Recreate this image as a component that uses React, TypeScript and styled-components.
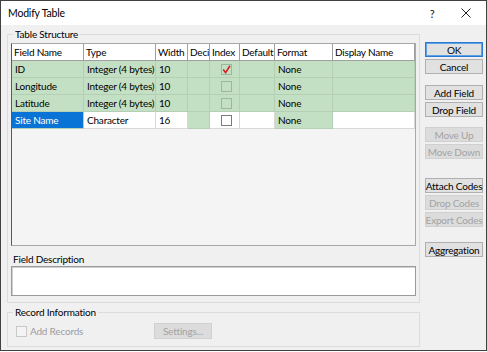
import React from "react";
import styled, { createGlobalStyle, css } from "styled-components";

const GlobalStyle = createGlobalStyle`
  html, body { margin: 0; padding: 0; background: #ffffff; }
  body { font-family: Lato, "Noto Sans", "Liberation Sans", sans-serif; font-size: 10px; letter-spacing: -0.2px; color: #000; }
  * { box-sizing: border-box; }
`;

const Dialog = styled.div`
  width: 487px;
  height: 351px;
  border: 1px solid #404040;
  background: #f0f0f0;
  display: flex;
  flex-direction: column;
  overflow: hidden;
`;

const TitleBar = styled.div`
  height: 24px;
  flex: none;
  background: #ffffff;
  display: flex;
  align-items: center;
  padding: 0 0 0 7px;
`;

const Title = styled.div`
  flex: 1;
  font-size: 10.5px;
`;

const TitleControl = styled.div<{ $w: number }>`
  width: ${(p) => p.$w}px;
  height: 24px;
  display: flex;
  align-items: center;
  justify-content: center;
  font-size: 11px;
  color: #111;
`;

const Body = styled.div`
  flex: 1;
  display: flex;
  padding: 3px 3px 3px 6px;
  gap: 5px;
`;

const LeftCol = styled.div`
  width: 413px;
  display: flex;
  flex-direction: column;
`;

const Group = styled.fieldset<{ $grow?: boolean }>`
  margin: 0;
  border: 1px solid #dcdcdc;
  padding: 0 3px 4px 3px;
  ${(p) => p.$grow && css`flex: 1;`}
  display: flex;
  flex-direction: column;
  min-width: 0;
`;

const Legend = styled.legend`
  padding: 0 2px;
  margin-left: 2px;
  font-size: 10px;
  color: #000;
`;

const Grid = styled.div`
  height: 203px;
  margin-top: 3px;
  border: 1px solid #a8a8a8;
  border-left-color: #5a5a5a;
  background: #f4f4f4;
  display: flex;
  flex-direction: column;
`;

const GridRow = styled.div`
  display: grid;
  grid-template-columns: 72px 72px 32px 22px 30px 35px 58px 82px;
  height: 17px;
`;

const Cell = styled.div<{ $bg: string; $header?: boolean; $center?: boolean; $sel?: boolean }>`
  background: ${(p) => p.$bg};
  color: ${(p) => (p.$sel ? "#ffffff" : "#000000")};
  border-right: 1px solid ${(p) => (p.$header ? "#a0a0a0" : p.$bg === "#ffffff" ? "#d8d8d8" : "#b4cfb4")};
  border-bottom: 1px solid ${(p) => (p.$header ? "#a0a0a0" : p.$bg === "#ffffff" ? "#d8d8d8" : "#b4cfb4")};
  padding: 0 0 0 ${(p) => (p.$header ? 2 : 3)}px;
  display: flex;
  align-items: center;
  justify-content: ${(p) => (p.$center ? "center" : "flex-start")};
  white-space: nowrap;
  overflow: hidden;
  font-size: 10px;
`;

const Check = styled.div<{ $white?: boolean }>`
  width: 11px;
  height: 11px;
  border: 1px solid ${(p) => (p.$white ? "#7a7a7a" : "#9fb59f")};
  background: ${(p) => (p.$white ? "#ffffff" : "transparent")};
  display: flex;
  align-items: center;
  justify-content: center;
`;

const Label = styled.div`
  margin-top: 7px;
  padding-left: 2px;
  font-size: 10px;
  height: 13px;
  line-height: 13px;
`;

const Description = styled.div`
  height: 30px;
  margin-top: 0;
  background: #fff;
  border: 1px solid #9a9a9a;
  box-shadow: inset 1px 1px 0 #d0d0d0;
`;

const RecordRow = styled.div`
  display: flex;
  align-items: center;
  height: 24px;
  padding-left: 5px;
  padding-top: 2px;
`;

const DisabledCheck = styled.div`
  width: 11px;
  height: 11px;
  border: 1px solid #c8c8c8;
  background: #f4f4f4;
  margin-right: 3px;
`;

const DisabledText = styled.div`
  color: #9d9d9d;
  font-size: 10px;
  width: 124px;
`;

const RightCol = styled.div`
  width: 58px;
  display: flex;
  flex-direction: column;
  padding-top: 14px;
`;

const Button = styled.div<{ $disabled?: boolean; $default?: boolean; $gap?: number }>`
  height: 15px;
  margin-top: ${(p) => p.$gap ?? 2}px;
  display: flex;
  align-items: center;
  justify-content: center;
  background: ${(p) => (p.$disabled ? "#dcdcdc" : "#e1e1e1")};
  border: 1px solid ${(p) => (p.$default ? "#2a7bd0" : p.$disabled ? "#d0d0d0" : "#b0b0b0")};
  color: ${(p) => (p.$disabled ? "#a3a3a3" : "#000")};
  font-size: 10px;
  white-space: nowrap;
  ${(p) => p.$default && css`box-shadow: inset 0 0 0 1px #5fa1e6;`}
`;

const SettingsButton = styled(Button)`
  width: 58px;
  height: 16px;
  margin-top: 0;
`;

const GREEN = "#c4e0c4";
const WHITE = "#ffffff";

type CellDef = { text?: string; bg: string; check?: "on" | "off" | "white"; sel?: boolean };

const CheckMark = () => (
  <svg width="9" height="9" viewBox="0 0 9 9">
    <path d="M1.2 4.6 L3.6 7.6 L8 0.8" stroke="#d42020" strokeWidth="1.6" fill="none" />
  </svg>
);

const CloseIcon = () => (
  <svg width="10" height="10" viewBox="0 0 10 10">
    <path d="M0.5 0.5 L9.5 9.5 M9.5 0.5 L0.5 9.5" stroke="#222" strokeWidth="1" fill="none" />
  </svg>
);

const headers = ["Field Name", "Type", "Width", "Deci", "Index", "Default", "Format", "Display Name"];

const greenRow = (name: string, check: "on" | "off"): CellDef[] => [
  { text: name, bg: GREEN },
  { text: "Integer (4 bytes)", bg: GREEN },
  { text: "10", bg: GREEN },
  { bg: GREEN },
  { bg: GREEN, check },
  { bg: GREEN },
  { text: "None", bg: GREEN },
  { bg: GREEN },
];

const rows: CellDef[][] = [
  greenRow("ID", "on"),
  greenRow("Longitude", "off"),
  greenRow("Latitude", "off"),
  [
    { text: "Site Name", bg: "#0a74d6", sel: true },
    { text: "Character", bg: WHITE },
    { text: "16", bg: WHITE },
    { bg: GREEN },
    { bg: WHITE, check: "white" },
    { bg: WHITE },
    { text: "None", bg: GREEN },
    { bg: WHITE },
  ],
];

export default function App() {
  return (
    <>
      <GlobalStyle />
      <Dialog>
        <TitleBar>
          <Title>Modify Table</Title>
          <TitleControl $w={28}>?</TitleControl>
          <TitleControl $w={40}>
            <CloseIcon />
          </TitleControl>
        </TitleBar>
        <Body>
          <LeftCol>
            <Group $grow>
              <Legend>Table Structure</Legend>
              <Grid>
                <GridRow>
                  {headers.map((h) => (
                    <Cell key={h} $bg="#ffffff" $header>
                      {h}
                    </Cell>
                  ))}
                </GridRow>
                {rows.map((r, i) => (
                  <GridRow key={i}>
                    {r.map((c, j) => (
                      <Cell key={j} $bg={c.bg} $sel={c.sel} $center={!!c.check}>
                        {c.check ? (
                          <Check $white={c.check === "white"}>{c.check === "on" && <CheckMark />}</Check>
                        ) : (
                          c.text
                        )}
                      </Cell>
                    ))}
                  </GridRow>
                ))}
              </Grid>
              <Label>Field Description</Label>
              <Description />
            </Group>
            <Group style={{ marginTop: 3 }}>
              <Legend>Record Information</Legend>
              <RecordRow>
                <DisabledCheck />
                <DisabledText>Add Records</DisabledText>
                <SettingsButton $disabled>Settings...</SettingsButton>
              </RecordRow>
            </Group>
          </LeftCol>
          <RightCol>
            <Button $default $gap={0}>OK</Button>
            <Button>Cancel</Button>
            <Button $gap={11}>Add Field</Button>
            <Button>Drop Field</Button>
            <Button $disabled $gap={10}>Move Up</Button>
            <Button $disabled>Move Down</Button>
            <Button $gap={19}>Attach Codes</Button>
            <Button $disabled>Drop Codes</Button>
            <Button $disabled>Export Codes</Button>
            <Button $gap={15}>Aggregation</Button>
          </RightCol>
        </Body>
      </Dialog>
    </>
  );
}
